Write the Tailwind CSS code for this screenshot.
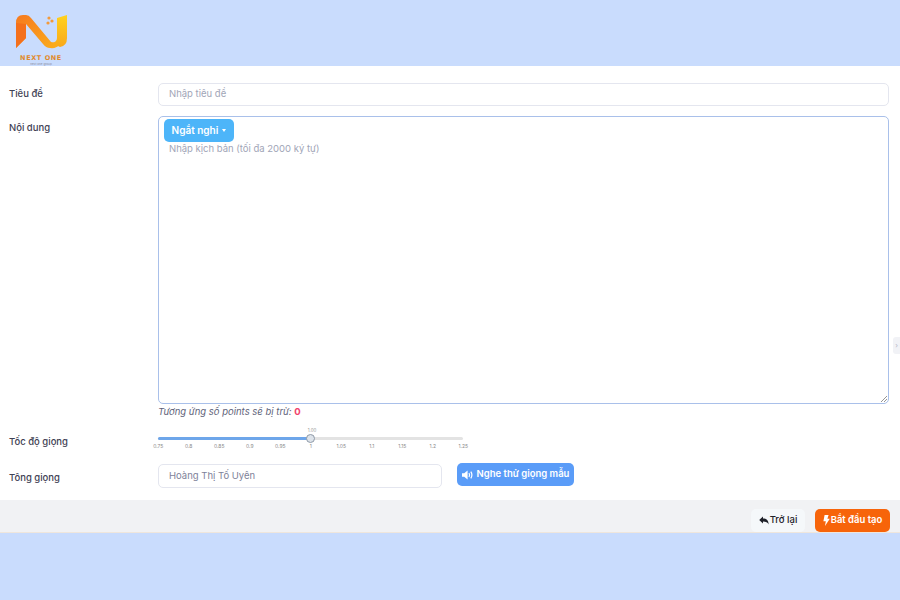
<!DOCTYPE html>
<html lang="vi">
<head>
<meta charset="utf-8">
<script src="https://cdn.jsdelivr.net/npm/@tailwindcss/browser@4"></script>
</head>
<body class="bg-[#c9dcfd] font-['Inter','Noto_Sans',sans-serif] text-[#3f4254] overflow-hidden">
<div class="w-[900px] h-[600px] flex flex-col relative overflow-hidden">
  <header class="h-[66px] shrink-0 pl-[12px] pt-[14px] overflow-hidden">
    <div class="w-[58px] flex flex-col items-center">
      <svg width="54" height="36" viewBox="0 0 54 36" class="block">
        <defs>
          <linearGradient id="a" x1="0" y1="0" x2="1" y2="1"><stop offset="0" stop-color="#f6791f"/><stop offset="1" stop-color="#fbb01c"/></linearGradient>
          <linearGradient id="b" x1="0" y1="0" x2="0" y2="1"><stop offset="0" stop-color="#ffd21e"/><stop offset="1" stop-color="#f9a81a"/></linearGradient>
        </defs>
        <path d="M2 9 Q2 1 9 1 L12 1 Q15 1 17 4 L37 28 L47 30 Q42 35 36 34 Q32 34 29 30 L12 10 L12 24 L2 34Z" fill="url(#a)"/>
        <path d="M2 9 L12 10 L12 24 L2 34Z" fill="#f4701c"/>
        <path d="M43 4 L53 1 L53 24 Q53 32 46 33 L38 29 Q43 28 43 24Z" fill="url(#b)"/>
        <circle cx="35" cy="4" r="1.6" fill="#f39a3a"/><circle cx="38" cy="7" r="1.6" fill="#f39a3a"/><circle cx="34" cy="9" r="1.6" fill="#f39a3a"/>
      </svg>
      <div class="text-[6.5px] leading-[8px] font-bold tracking-[0.6px] text-[#e08a2c] mt-[4px] whitespace-nowrap font-['DejaVu_Sans',sans-serif]">NEXT ONE</div>
      <div class="text-[3px] leading-[4px] text-[#8a8fa0] whitespace-nowrap">next one group</div>
    </div>
  </header>

  <main class="h-[434px] shrink-0 bg-white pl-[9px] pr-[11px] pt-[17px] text-[9.5px]">
    <div class="grid grid-cols-[149px_1fr] items-start">
      <label class="font-medium text-[#3f4254] pt-[5px] leading-[12px]">Tiêu đề</label>
      <div class="h-[23px] rounded-[5px] border border-[#e4e6ef] px-[10px] flex items-center text-[#a1a5b7]">Nhập tiêu đề</div>

      <label class="font-medium text-[#3f4254] mt-[11px] pt-[5px] leading-[12px]">Nội dung</label>
      <div class="mt-[10px] flex flex-col">
        <div class="h-[288px] rounded-[5px] border border-[#a9c0ea] px-[5px] pt-[2px] relative">
          <button class="h-[23px] w-[70px] rounded-[5px] bg-[#4db5f9] text-white font-semibold text-[10px] flex items-center justify-center gap-[4px]">Ngắt nghỉ
            <span class="w-0 h-0 border-x-[2.5px] border-x-transparent border-t-[3px] border-t-white"></span>
          </button>
          <div class="pl-[5px] mt-[1px] text-[#a1a5b7] leading-[12px]">Nhập kịch bản (tối đa 2000 ký tự)</div>
          <svg width="8" height="8" viewBox="0 0 8 8" class="absolute right-[0px] bottom-[0px]"><path d="M1 7 L7 1 M4 7 L7 4" stroke="#8a8a8a" stroke-width="0.9"/></svg>
        </div>
        <div class="mt-[2px] italic text-[#5e6278] leading-[12px] h-[12px]">Tương ứng số points sẽ bị trừ: <span class="text-[#f1416c] font-bold not-italic">0</span></div>
      </div>

      <label class="font-medium text-[#3f4254] mt-[16px] pt-[2px] leading-[12px]">Tốc độ giọng</label>
      <div class="mt-[16px] w-[305px] relative pt-[3px]">
        <div class="absolute left-[146px] -top-[6px] text-[4.5px] leading-[6px] text-[#999] w-[16px] text-center">1.00</div>
        <div class="h-[3px] rounded-full bg-[#e3e3e3] relative">
          <div class="h-full w-[152px] rounded-l-full bg-[#6ea6ea]"></div>
          <div class="absolute left-[148px] -top-[3px] w-[9px] h-[9px] rounded-full bg-[#dde3ea] border border-[#8f9aa8]"></div>
        </div>
        <div class="flex -ml-[15px] mt-[3px] w-[336px] text-[5px] leading-[7px] text-[#8b8b8b]">
          <span class="w-[30.5px] text-center">0.75</span><span class="w-[30.5px] text-center">0.8</span><span class="w-[30.5px] text-center">0.85</span><span class="w-[30.5px] text-center">0.9</span><span class="w-[30.5px] text-center">0.95</span><span class="w-[30.5px] text-center">1</span><span class="w-[30.5px] text-center">1.05</span><span class="w-[30.5px] text-center">1.1</span><span class="w-[30.5px] text-center">1.15</span><span class="w-[30.5px] text-center">1.2</span><span class="w-[30.5px] text-center">1.25</span>
        </div>
      </div>

      <label class="font-medium text-[#3f4254] mt-[18px] pt-[4px] leading-[12px]">Tông giọng</label>
      <div class="mt-[14px] flex items-start gap-[15px]">
        <div class="w-[284px] h-[24px] rounded-[5px] border border-[#e4e6ef] px-[10px] flex items-center text-[#7e8299]">Hoàng Thị Tố Uyên</div>
        <button class="h-[23px] w-[117px] -mt-[1px] rounded-[5px] bg-[#5a9cf8] text-white font-semibold text-[9.5px] flex items-center justify-center gap-[3px]">
          <svg width="12" height="10" viewBox="0 0 12 10"><path d="M0 3.2H2.2L5.6 .6V9.4L2.2 6.8H0Z" fill="#fff"/><path d="M7 3Q8.2 5 7 7M8.8 1.6Q11 5 8.8 8.4" stroke="#fff" stroke-width="1.2" fill="none"/></svg>
          Nghe thử giọng mẫu
        </button>
      </div>
    </div>
  </main>

  <footer class="h-[33px] shrink-0 bg-[#f1f2f4] border-b border-[#efe6dc] flex items-start justify-end gap-[10px] pr-[10px] pt-[9px] text-[9.5px]">
    <button class="h-[23px] w-[54px] rounded-[5px] bg-[#f5f8fa] text-[#1e2129] font-medium flex items-center justify-center gap-[1px]">
      <svg width="10" height="9" viewBox="0 0 10 9"><path d="M4 .5V2.6C7.5 2.6 9.6 4.6 9.6 8.4 8.6 6.2 7 5.4 4 5.4V7.5L.2 4Z" fill="#1e2129"/></svg>
      Trở lại
    </button>
    <button class="h-[23px] w-[75px] rounded-[5px] bg-[#f7640a] text-white font-semibold flex items-center justify-center gap-[1px]">
      <svg width="7" height="11" viewBox="0 0 7 11"><path d="M1.6 0H5.6L4.4 3.8H6.8L2 11 2.8 6.2H.4Z" fill="#fff"/></svg>
      Bắt đầu tạo
    </button>
  </footer>

  <div class="absolute right-0 top-[337px] w-[7px] h-[17px] rounded-l-[3px] bg-[#f1f2f6] text-[7px] leading-[17px] text-[#b5b5c3] text-center">›</div>
</div>
</body>
</html>
